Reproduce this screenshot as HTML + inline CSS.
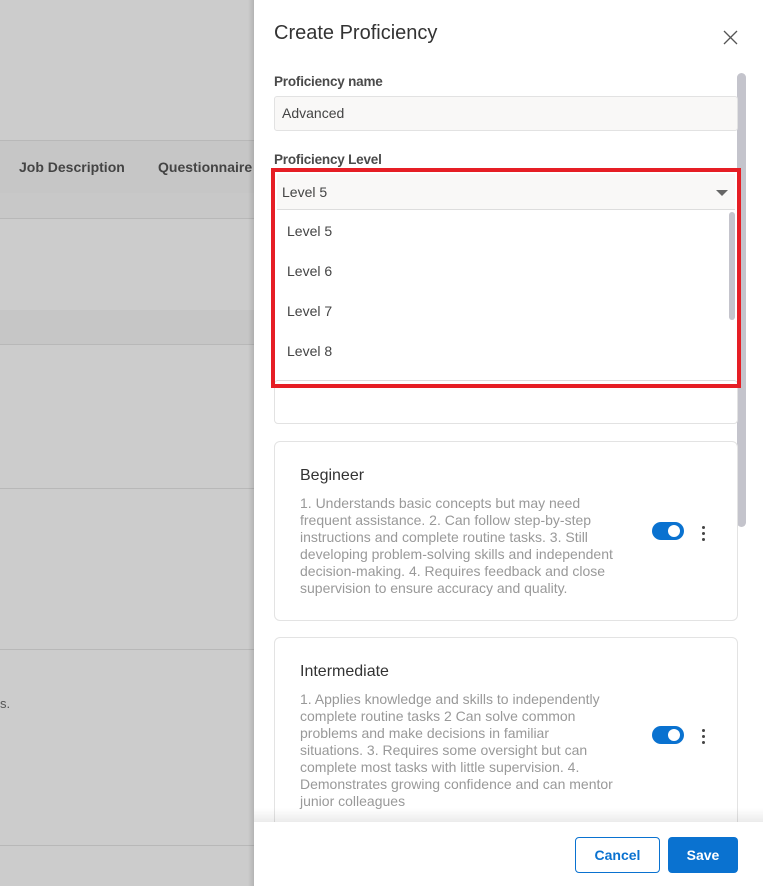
<!DOCTYPE html>
<html><head><style>
*{box-sizing:border-box;margin:0;padding:0}
body{width:763px;height:886px;overflow:hidden;position:relative;font-family:"Liberation Sans",sans-serif;background:#cccccc}
.a{position:absolute}
.ln{position:absolute;left:0;width:254px;height:1px;background:#b8b8b8}
.lbl{position:absolute;left:274px;font-size:13.5px;color:#4a4a4a;font-weight:bold;letter-spacing:-.2px}
.card{position:absolute;left:274px;width:464px;border:1px solid #e3e3e3;border-radius:6px;background:#fff}
.card h3{position:absolute;left:25px;font-size:16px;font-weight:normal;color:#333}
.card p{position:absolute;left:25px;width:314px;font-size:14px;line-height:17px;color:#999}
.tog{position:absolute;left:377px;width:32px;height:18px;border-radius:9px;background:#0a72d0}
.tog:after{content:"";position:absolute;right:4px;top:3px;width:12px;height:12px;border-radius:50%;background:#fff}
.dots{position:absolute;left:427px;width:3px}
.dots i{display:block;width:3px;height:3px;border-radius:50%;background:#444;margin-bottom:3px}
.it{position:absolute;left:287px;font-size:14px;color:#444}
</style></head><body>
<div class="a" style="left:0;top:141px;width:254px;height:52px;background:#c6c6c6"></div>
<div class="a" style="left:0;top:193px;width:254px;height:25px;background:#c8c8c8"></div>
<div class="a" style="left:0;top:310px;width:254px;height:34px;background:#c6c6c6"></div>
<div class="ln" style="top:140px"></div><div class="ln" style="top:218px"></div><div class="ln" style="top:344px"></div><div class="ln" style="top:488px"></div><div class="ln" style="top:649px"></div><div class="ln" style="top:845px"></div>
<div class="a" style="left:19px;top:159px;font-size:14px;color:#444;font-weight:bold">Job Description</div>
<div class="a" style="left:158px;top:159px;font-size:14px;color:#444;font-weight:bold">Questionnaire</div>
<div class="a" style="left:0;top:696px;font-size:13px;color:#555">s.</div>
<div class="a" style="left:248px;top:0;width:6px;height:886px;background:linear-gradient(90deg,rgba(0,0,0,0),rgba(0,0,0,.12))"></div>
<div class="a" style="left:254px;top:0;width:509px;height:886px;background:#fff"></div>
<div class="a" style="left:274px;top:22px;font-size:20px;color:#333">Create Proficiency</div>
<svg class="a" style="left:723px;top:30px" width="15" height="15" viewBox="0 0 15 15"><path d="M1 1L14 14M14 1L1 14" stroke="#555" stroke-width="1.3"/></svg>
<div class="a" style="left:737px;top:73px;width:9px;height:454px;border-radius:5px;background:#c4c4cc"></div>
<div class="lbl" style="top:74px">Proficiency name</div>
<div class="a" style="left:274px;top:96px;width:464px;height:35px;background:#f9f8f7;border:1px solid #e2e2e2;border-radius:3px;font-size:14px;color:#444;padding:8px 7px">Advanced</div>
<div class="lbl" style="top:152px">Proficiency Level</div>
<div class="a" style="left:274px;top:380px;width:464px;height:44px;border:1px solid #e2e2e2;border-radius:4px"></div>
<div class="a" style="left:277px;top:174px;width:458px;height:36px;background:#f9f8f7;border-bottom:1px solid #ddd;font-size:14px;color:#444;padding:10px 5px">Level 5</div>
<div class="a" style="left:716px;top:190px;width:0;height:0;border-left:6px solid transparent;border-right:6px solid transparent;border-top:6px solid #666"></div>
<div class="a" style="left:277px;top:210px;width:458px;height:171px;background:#fff;border-bottom:1px solid #ddd"></div>
<div class="a" style="left:729px;top:212px;width:6px;height:108px;border-radius:3px;background:#c4c4cc"></div>
<div class="it" style="top:223px">Level 5</div><div class="it" style="top:263px">Level 6</div><div class="it" style="top:303px">Level 7</div><div class="it" style="top:343px">Level 8</div>
<div class="a" style="left:271px;top:168px;width:470px;height:220px;border:4px solid #e61e25"></div>
<div class="card" style="top:441px;height:180px">
<h3 style="top:25px">Begineer</h3>
<p style="top:53px">1. Understands basic concepts but may need frequent assistance. 2. Can follow step-by-step instructions and complete routine tasks. 3. Still developing problem-solving skills and independent decision-making. 4. Requires feedback and close supervision to ensure accuracy and quality.</p>
<div class="tog" style="top:80px"></div><div class="dots" style="top:84px"><i></i><i></i><i></i></div>
</div>
<div class="card" style="top:637px;height:240px">
<h3 style="top:25px">Intermediate</h3>
<p style="top:53px">1. Applies knowledge and skills to independently complete routine tasks 2 Can solve common problems and make decisions in familiar situations. 3. Requires some oversight but can complete most tasks with little supervision. 4. Demonstrates growing confidence and can mentor junior colleagues</p>
<div class="tog" style="top:88px"></div><div class="dots" style="top:91px"><i></i><i></i><i></i></div>
</div>
<div class="a" style="left:254px;top:808px;width:509px;height:14px;background:linear-gradient(rgba(0,0,0,0),rgba(0,0,0,.08))"></div>
<div class="a" style="left:254px;top:822px;width:509px;height:64px;background:#fff"></div>
<div class="a" style="left:575px;top:837px;width:85px;height:36px;border:1px solid #0a72d0;border-radius:4px;color:#0a72d0;font-size:14px;font-weight:bold;text-align:center;line-height:34px">Cancel</div>
<div class="a" style="left:668px;top:837px;width:70px;height:36px;background:#0a72d0;border-radius:4px;color:#fff;font-size:14px;font-weight:bold;text-align:center;line-height:36px">Save</div>
</body></html>
